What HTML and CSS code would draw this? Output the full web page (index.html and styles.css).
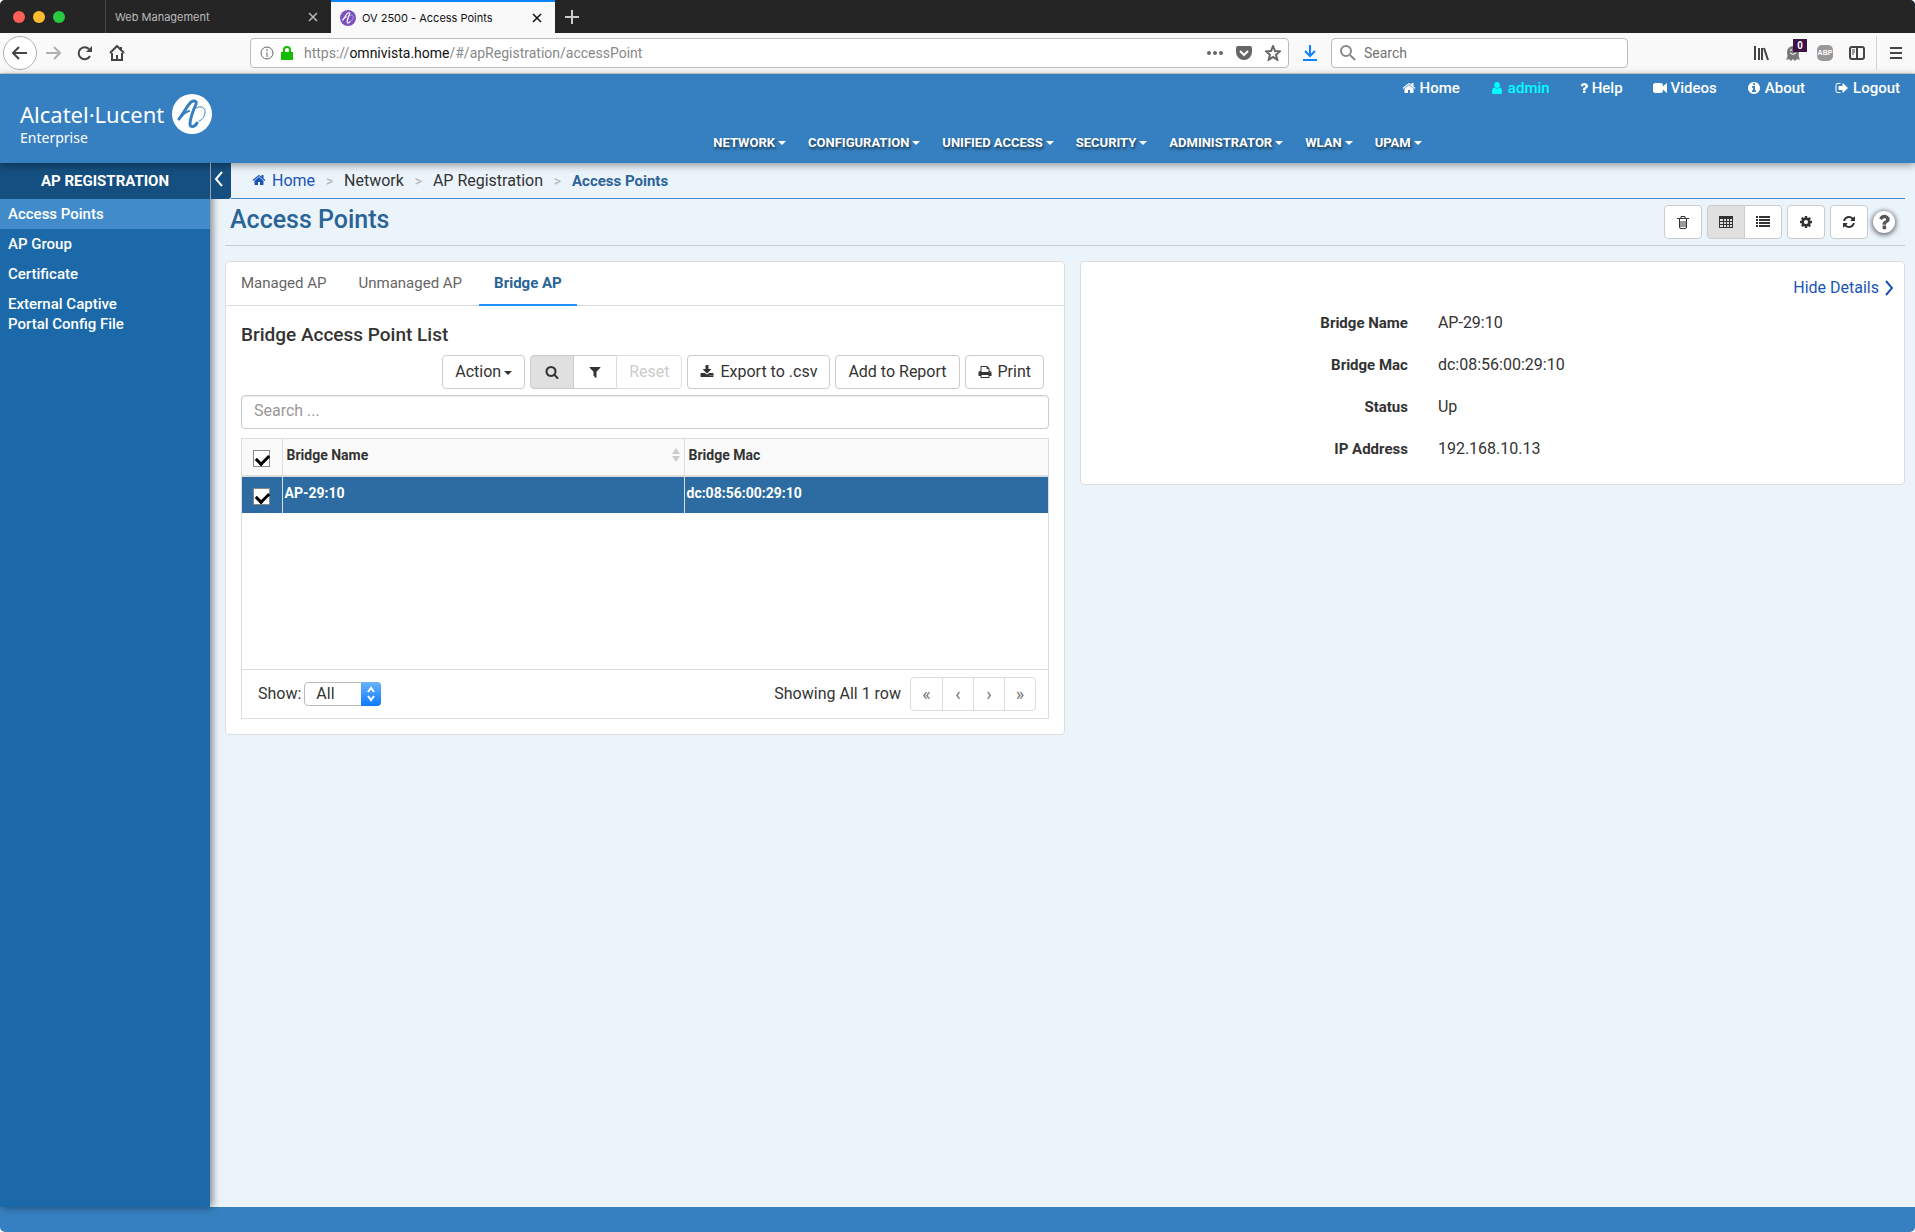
FILE: index.html
```
<!DOCTYPE html>
<html lang="en">
<head>
	<meta charset="UTF-8">
	<title>OV 2500 - Access Points</title>
	<link rel="stylesheet" href="styles.css">
</head>
<body>
<!-- icon sprite -->
<svg class="sprite" aria-hidden="true">
	<symbol id="i-home" viewBox="0 0 1792 1792"><path d="M1472 992v480q0 26-19 45t-45 19h-384v-384h-256v384h-384q-26 0-45-19t-19-45v-480q0-1 .5-3t.5-3l575-474 575 474q1 2 1 6zm223-69l-62 74q-8 9-21 11h-3q-13 0-21-7l-692-577-692 577q-12 8-24 7-13-2-21-11l-62-74q-8-10-7-23.5t11-21.5l719-599q32-26 76-26t76 26l244 204v-195q0-14 9-23t23-9h192q14 0 23 9t9 23v408l219 182q10 8 11 21.5t-7 23.5z"/></symbol>
	<symbol id="i-user" viewBox="0 0 1792 1792"><path d="M1536 1399q0 109-62.500 187t-150.500 78h-854q-88 0-150.500-78t-62.500-187q0-85 8.500-160.500t31.500-152 58.500-131 94-89 134.500-34.500q131 128 313 128t313-128q76 0 134.500 34.500t94 89 58.500 131 31.500 152 8.500 160.500zm-256-887q0 159-112.500 271.500t-271.500 112.500-271.500-112.500-112.500-271.500 112.500-271.500 271.500-112.500 271.500 112.500 112.500 271.500z"/></symbol>
	<symbol id="i-question" viewBox="384 0 1024 1792"><path d="M1088 1256v240q0 16-12 28t-28 12h-240q-16 0-28-12t-12-28v-240q0-16 12-28t28-12h240q16 0 28 12t12 28zm316-600q0 54-15.500 101t-35 76.500-55 59.500-57.500 43.500-61 35.500q-41 23-68.500 65t-27.500 67q0 17-12 32.500t-28 15.500h-240q-15 0-25.500-18.500t-10.500-37.500v-45q0-83 65-156.500t143-108.500q59-27 84-56t25-76q0-42-46.500-74t-107.500-32q-65 0-108 29-35 25-107 115-13 16-31 16-12 0-25-8l-164-125q-13-10-15.500-25t5.500-28q160-266 464-266 80 0 161 31t146 83 106 127.500 41 158.500z"/></symbol>
	<symbol id="i-video" viewBox="0 0 1792 1792"><path d="M1792 352v1088q0 42-39 59-13 5-25 5-27 0-45-19l-403-403v166q0 119-84.500 203.500t-203.500 84.500h-704q-119 0-203.500-84.500t-84.500-203.500v-704q0-119 84.500-203.500t203.500-84.500h704q119 0 203.500 84.500t84.500 203.500v165l403-402q18-19 45-19 12 0 25 5 39 17 39 59z"/></symbol>
	<symbol id="i-info" viewBox="0 0 1792 1792"><path d="M1152 1376v-160q0-14-9-23t-23-9h-96v-512q0-14-9-23t-23-9h-320q-14 0-23 9t-9 23v160q0 14 9 23t23 9h96v320h-96q-14 0-23 9t-9 23v160q0 14 9 23t23 9h448q14 0 23-9t9-23zm-128-896v-160q0-14-9-23t-23-9h-192q-14 0-23 9t-9 23v160q0 14 9 23t23 9h192q14 0 23-9t9-23zm640 416q0 209-103 385.500t-279.500 279.500-385.500 103-385.500-103-279.500-279.500-103-385.500 103-385.500 279.500-279.500 385.500-103 385.500 103 279.500 279.500 103 385.500z"/></symbol>
	<symbol id="i-logout" viewBox="0 0 1792 1792"><path d="M704 1440q0 4 1 20t.5 26.500-3 23.500-10 19.500-20.500 6.500h-320q-119 0-203.500-84.500t-84.500-203.500v-704q0-119 84.500-203.500t203.500-84.500h320q13 0 22.500 9.500t9.500 22.500q0 4 1 20t.5 26.500-3 23.500-10 19.500-20.500 6.500h-320q-66 0-113 47t-47 113v704q0 66 47 113t113 47h312l11.500 1 11.500 3 8 5.500 7 9 2 13.500zm928-544q0 26-19 45l-544 544q-19 19-45 19t-45-19-19-45v-288h-448q-26 0-45-19t-19-45v-384q0-26 19-45t45-19h448v-288q0-26 19-45t45-19 45 19l544 544q19 19 19 45z"/></symbol>
	<symbol id="i-search" viewBox="0 0 1792 1792"><path d="M1216 832q0-185-131.500-316.500t-316.500-131.500-316.500 131.500-131.500 316.500 131.500 316.500 316.500 131.500 316.500-131.500 131.500-316.500zm512 832q0 52-38 90t-90 38q-54 0-90-38l-343-342q-179 124-399 124-143 0-273.500-55.500t-225-150-150-225-55.500-273.500 55.500-273.500 150-225 225-150 273.500-55.500 273.500 55.500 225 150 150 225 55.500 273.500q0 220-124 399l343 343q37 37 37 90z"/></symbol>
	<symbol id="i-filter" viewBox="0 0 1792 1792"><path d="M1595 295q17 41-14 70l-493 493v742q0 42-39 59-13 5-25 5-27 0-45-19l-256-256q-19-19-19-45v-486l-493-493q-31-29-14-70 17-39 59-39h1280q42 0 59 39z"/></symbol>
	<symbol id="i-download" viewBox="0 0 1792 1792"><path d="M1344 1344q0-26-19-45t-45-19-45 19-19 45 19 45 45 19 45-19 19-45zm256 0q0-26-19-45t-45-19-45 19-19 45 19 45 45 19 45-19 19-45zm128-224v320q0 40-28 68t-68 28h-1472q-40 0-68-28t-28-68v-320q0-40 28-68t68-28h465l135 136q58 56 136 56t136-56l136-136h464q40 0 68 28t28 68zm-325-569q17 41-14 70l-448 448q-18 19-45 19t-45-19l-448-448q-31-29-14-70 17-39 59-39h256v-448q0-26 19-45t45-19h256q26 0 45 19t19 45v448h256q42 0 59 39z"/></symbol>
	<symbol id="i-print" viewBox="0 0 1792 1792"><path d="M448 1536h896v-256h-896v256zm0-640h896v-384h-160q-40 0-68-28t-28-68v-160h-640v640zm1152 64q0-26-19-45t-45-19-45 19-19 45 19 45 45 19 45-19 19-45zm128 0v416q0 13-9.500 22.500t-22.500 9.500h-224v160q0 40-28 68t-68 28h-960q-40 0-68-28t-28-68v-160h-224q-13 0-22.500-9.500t-9.500-22.500v-416q0-79 56.500-135.500t135.500-56.500h64v-544q0-40 28-68t68-28h672q40 0 88 20t76 48l152 152q28 28 48 76t20 88v256h64q79 0 135.500 56.500t56.500 135.500z"/></symbol>
	<symbol id="i-cog" viewBox="0 0 1792 1792"><path d="M1152 896q0-106-75-181t-181-75-181 75-75 181 75 181 181 75 181-75 75-181zm512-109v222q0 12-8 23t-20 13l-185 28q-19 54-39 91 35 50 107 138 10 12 10 25t-9 23q-27 37-99 108t-94 71q-12 0-26-9l-138-108q-44 23-91 38-16 136-29 186-7 28-36 28h-222q-14 0-24.500-8.500t-11.500-21.500l-28-184q-49-16-90-37l-141 107q-10 9-25 9-14 0-25-11-126-114-165-168-7-10-7-23 0-12 8-23 15-21 51-66.500t54-70.500q-27-50-41-99l-183-27q-13-2-21-12.500t-8-23.500v-222q0-12 8-23t19-13l186-28q14-46 39-92-40-57-107-138-10-12-10-24 0-10 9-23 26-36 98.500-107.500t94.500-71.500q13 0 26 10l138 107q44-23 91-38 16-136 29-186 7-28 36-28h222q14 0 24.500 8.500t11.500 21.500l28 184q49 16 90 37l142-107q9-9 24-9 13 0 25 10 129 119 165 170 7 8 7 22 0 12-8 23-15 21-51 66.500t-54 70.500q26 50 41 98l183 28q13 2 21 12.500t8 23.500z"/></symbol>
	<symbol id="i-refresh" viewBox="0 0 1792 1792"><path d="M1639 1056q0 5-1 7-64 268-268 434.500t-478 166.500q-146 0-282.500-55t-243.500-157l-129 129q-19 19-45 19t-45-19-19-45v-448q0-26 19-45t45-19h448q26 0 45 19t19 45-19 45l-137 137q71 66 161 102t187 36q134 0 250-65t186-179q11-17 53-117 8-23 30-23h192q13 0 22.500 9.500t9.500 22.500zm25-800v448q0 26-19 45t-45 19h-448q-26 0-45-19t-19-45 19-45l138-138q-148-137-349-137-134 0-250 65t-186 179q-11 17-53 117-8 23-30 23h-199q-13 0-22.500-9.500t-9.500-22.500v-7q65-268 270-434.500t480-166.500q146 0 284 55.500t245 156.500l130-129q19-19 45-19t45 19 19 45z"/></symbol>
	<symbol id="i-ale" viewBox="0 0 40 40"><circle cx="20" cy="20" r="20"/><path class="ink" d="M7 25C11 20 15 12 19 8C22 6 25 7 24 10C21 17 18 24 18 30C18 34 23 33 25 29" stroke-width="3"/><path class="ink" d="M7 25C10 21 14 18 17 17" stroke-width="2"/><path class="ink" d="M24 14C29 11 34 14 33 19C32 24 30 26 27 27" stroke-width="1"/></symbol>
</svg>

<div class="window">
	<!-- browser tabs -->
	<div class="tabbar">
		<div class="lights"><i class="red"></i><i class="yellow"></i><i class="green"></i></div>
		<div class="tab">
			<span>Web Management</span>
			<svg class="x" viewBox="0 0 10 10"><path d="M1 1l8 8M9 1l-8 8"/></svg>
		</div>
		<div class="tab current">
			<svg class="favicon"><use href="#i-ale"/></svg>
			<span>OV 2500 - Access Points</span>
			<svg class="x" viewBox="0 0 10 10"><path d="M1 1l8 8M9 1l-8 8"/></svg>
		</div>
		<svg class="plus" viewBox="0 0 14 14"><path d="M7 0v14M0 7h14"/></svg>
	</div>

	<!-- browser toolbar -->
	<div class="toolbar">
		<button class="back" aria-label="Back"><svg class="line" viewBox="0 0 16 16"><path d="M15 8H1M7 2L1 8l6 6"/></svg></button>
		<button class="tool dim" aria-label="Forward"><svg class="line" viewBox="0 0 16 16"><path d="M1 8h14M9 2l6 6-6 6"/></svg></button>
		<button class="tool" aria-label="Reload"><svg class="line" viewBox="0 0 16 16"><path d="M13 11A6 6 0 1 1 12 4"/><path class="solid" d="M15 1v6H9z"/></svg></button>
		<button class="tool" aria-label="Home page"><svg class="line" viewBox="0 0 16 16"><path d="M1 8l7-7 7 7M3 8v7h10V8"/><path class="solid" d="M7 10h2v5H7zM11 2h2v3h-2z"/></svg></button>
		<div class="urlbox">
			<svg class="info" viewBox="0 0 14 14"><circle cx="7" cy="7" r="6"/><path d="M7 6v5M7 3v2"/></svg>
			<svg class="lock" viewBox="0 0 14 14"><path d="M1 6h12v8H1z"/><path class="shackle" d="M4 7V4a3 3 0 0 1 6 0v3"/></svg>
			<div class="url">https://<b>omnivista.home</b>/#/apRegistration/accessPoint</div>
			<svg class="fill" viewBox="0 0 16 16"><circle cx="2" cy="8" r="2"/><circle cx="8" cy="8" r="2"/><circle cx="14" cy="8" r="2"/></svg>
			<svg class="fill" viewBox="0 0 16 16"><path d="M2 1h12q2 0 2 2v4a8 8 0 0 1-16 0V3q0-2 2-2z"/><path class="tick" d="M4 6l4 4 4-4"/></svg>
			<svg class="line" viewBox="0 0 16 16"><path d="M8 1l2 5 5 .4-4 3.400 1.300 5L8 12l-4.300 2.800 1.300-5-4-3.400L6 6z"/></svg>
		</div>
		<button class="tool blue" aria-label="Downloads"><svg class="line" viewBox="0 0 16 16"><path d="M8 0v11M3 6l5 5 5-5M1 15h14"/></svg></button>
		<label class="searchbox">
			<svg viewBox="0 0 16 16"><circle cx="6" cy="6" r="5"/><path d="M10 10l5 5"/></svg>
			<input type="text" placeholder="Search" aria-label="Search the web">
		</label>
		<div class="addons">
			<svg class="line" viewBox="0 0 16 16"><path d="M2 1v14M6 3v12M9 3v12M11 3l4 12"/></svg>
			<div class="ghost">
				<svg viewBox="0 0 16 16"><path d="M2 13C3 11 2 9 2 7a6 6 0 0 1 12 0c0 2-1 4 1 8l-3-1-2 2-2-2-2 2-2-2-3 1z"/><path class="face" d="M5 8q3 3 6 0M6 4v2M10 4v2"/></svg>
				<span class="badge">0</span>
			</div>
			<div class="abp">ABP</div>
			<svg class="line" viewBox="0 0 16 16"><rect x="1" y="2" width="14" height="12" rx="2"/><path d="M8 2v12"/><path class="thin" d="M3 5h3M3 7h3M3 9h2"/></svg>
			<span class="sep"></span>
			<svg class="line" viewBox="0 0 16 16"><path d="M2 3h12M2 8h12M2 13h12"/></svg>
		</div>
	</div>

	<header class="header">
		<div class="brand">
			<div>
				<div class="name">Alcatel·Lucent</div>
				<div class="sub">Enterprise</div>
			</div>
			<svg class="logo"><use href="#i-ale"/></svg>
		</div>
		<div class="menus">
			<nav class="topmenu">
				<a href="#"><svg><use href="#i-home"/></svg>Home</a>
				<a href="#" class="me"><svg><use href="#i-user"/></svg>admin</a>
				<a href="#"><svg class="slim"><use href="#i-question"/></svg>Help</a>
				<a href="#"><svg><use href="#i-video"/></svg>Videos</a>
				<a href="#"><svg><use href="#i-info"/></svg>About</a>
				<a href="#"><svg><use href="#i-logout"/></svg>Logout</a>
			</nav>
			<nav class="mainmenu">
				<a href="#">NETWORK<i class="caret"></i></a>
				<a href="#">CONFIGURATION<i class="caret"></i></a>
				<a href="#">UNIFIED ACCESS<i class="caret"></i></a>
				<a href="#">SECURITY<i class="caret"></i></a>
				<a href="#">ADMINISTRATOR<i class="caret"></i></a>
				<a href="#">WLAN<i class="caret"></i></a>
				<a href="#">UPAM<i class="caret"></i></a>
			</nav>
		</div>
	</header>

	<div class="main">
		<aside class="sidebar">
			<h2>AP REGISTRATION</h2>
			<a href="#" class="active">Access Points</a>
			<a href="#">AP Group</a>
			<a href="#">Certificate</a>
			<a href="#">External Captive<br>Portal Config File</a>
		</aside>

		<div class="content">
			<div class="crumbs">
				<button class="collapse" aria-label="Collapse menu"><svg viewBox="0 0 10 16"><path d="M8 1L2 8l6 7"/></svg></button>
				<ul>
					<li><a href="#"><svg><use href="#i-home"/></svg>Home</a></li>
					<li>Network</li>
					<li>AP Registration</li>
					<li class="here">Access Points</li>
				</ul>
			</div>

			<div class="titlebar">
				<h1>Access Points</h1>
				<button class="btn icon" aria-label="Delete"><svg viewBox="0 0 14 14"><path class="can" d="M4 6h6v6H4z"/><path class="line thin" d="M1 3.500h12M5 3V1.500h4V3M3.500 4v8q0 1.500 1.500 1.500h4q1.500 0 1.500-1.500V4"/></svg></button>
				<div class="group">
					<button class="btn icon on" aria-label="Table view"><svg viewBox="0 0 14 14"><path fill-rule="evenodd" d="M0 1h14v12H0zM1 4v2h3V4zM5 4v2h2V4zM8 4v2h2V4zM11 4v2h2V4zM1 7v2h3V7zM5 7v2h2V7zM8 7v2h2V7zM11 7v2h2V7zM1 10v2h3v-2zM5 10v2h2v-2zM8 10v2h2v-2zM11 10v2h2v-2z"/></svg></button>
					<button class="btn icon" aria-label="List view"><svg viewBox="0 0 14 14"><path d="M0 1h2v2H0zM3 1h11v2H3zM0 4h2v2H0zM3 4h11v2H3zM0 7h2v2H0zM3 7h11v2H3zM0 10h2v2H0zM3 10h11v2H3z"/></svg></button>
				</div>
				<button class="btn icon" aria-label="Settings"><svg><use href="#i-cog"/></svg></button>
				<button class="btn icon" aria-label="Refresh"><svg><use href="#i-refresh"/></svg></button>
				<button class="help" aria-label="Help"><svg><use href="#i-question"/></svg></button>
			</div>

			<div class="panels">
				<section class="panel">
					<nav class="tabs">
						<a href="#">Managed AP</a>
						<a href="#">Unmanaged AP</a>
						<a href="#" class="active">Bridge AP</a>
					</nav>
					<div class="body">
						<h3>Bridge Access Point List</h3>
						<div class="actions">
							<button class="btn">Action<i class="caret"></i></button>
							<div class="group">
								<button class="btn find on" aria-label="Show search"><svg><use href="#i-search"/></svg></button>
								<button class="btn find" aria-label="Filter"><svg><use href="#i-filter"/></svg></button>
								<button class="btn" disabled>Reset</button>
							</div>
							<button class="btn"><svg><use href="#i-download"/></svg>Export to .csv</button>
							<button class="btn">Add to Report</button>
							<button class="btn"><svg><use href="#i-print"/></svg>Print</button>
						</div>
						<input class="filter" type="text" placeholder="Search ..." aria-label="Search the list">
						<div class="grid">
							<div class="rows">
								<table>
									<thead>
										<tr>
											<th class="check"><input type="checkbox" checked aria-label="Select all"></th>
											<th class="nm"><div>Bridge Name<svg viewBox="0 0 8 14"><path d="M0 6l4-6 4 6zM0 8l4 6 4-6z"/></svg></div></th>
											<th>Bridge Mac</th>
										</tr>
									</thead>
									<tbody>
										<tr>
											<td class="check"><input type="checkbox" checked aria-label="Select AP-29:10"></td>
											<td>AP-29:10</td>
											<td>dc:08:56:00:29:10</td>
										</tr>
									</tbody>
								</table>
							</div>
							<div class="foot">
								<label for="show">Show:</label>
								<div class="select">
									<select id="show"><option>All</option></select>
									<svg viewBox="0 0 20 24"><path d="M7 10l3-4 3 4M7 14l3 4 3-4"/></svg>
								</div>
								<span class="count">Showing All 1 row</span>
								<div class="pager">
									<button aria-label="First">«</button>
									<button aria-label="Previous">‹</button>
									<button aria-label="Next">›</button>
									<button aria-label="Last">»</button>
								</div>
							</div>
						</div>
					</div>
				</section>

				<section class="panel details">
					<a href="#" class="hide">Hide Details<svg viewBox="0 0 10 16"><path d="M2 1l6 7-6 7"/></svg></a>
					<dl>
						<dt>Bridge Name</dt><dd>AP-29:10</dd>
						<dt>Bridge Mac</dt><dd>dc:08:56:00:29:10</dd>
						<dt>Status</dt><dd>Up</dd>
						<dt>IP Address</dt><dd>192.168.10.13</dd>
					</dl>
				</section>
			</div>
		</div>
	</div>
	<footer class="footer"></footer>
</div>
</body>
</html>
```
FILE: styles.css
```
*{
	box-sizing: border-box;
}
body{
	margin: 0;
	background: #fff;
	color: #333;
	font: 16px/20px Roboto, "Noto Sans", sans-serif;
}
a{
	text-decoration: none;
}
button, input, select{
	font: inherit;
	color: inherit;
}
button{
	padding: 0;
	border: 0;
	background: none;
}
h1, h2, h3, ul, dl, dd{
	margin: 0;
	padding: 0;
}
svg{
	flex: none;
	width: 14px;
	height: 14px;
	fill: currentColor;
}
.sprite{
	position: absolute;
	width: 0;
	height: 0;
}
.ink{
	fill: none;
	stroke: var(--ink);
	stroke-linecap: round;
}
.window{
	display: flex;
	flex-direction: column;
	min-height: 100vh;
	border-radius: 5px;
	overflow: hidden;
	background: #3680c1;
}

/* browser */
.tabbar{
	display: flex;
	align-items: center;
	height: 33px;
	background: #252525;
	font: 11px/16px Inter, sans-serif;
}
.lights{
	display: flex;
	gap: 8px;
	width: 105px;
	padding-left: 13px;
}
.lights i{
	width: 12px;
	height: 12px;
	border-radius: 50%;
}
.red{
	background: #ff5f57;
}
.yellow{
	background: #ffbd2e;
}
.green{
	background: #28ca41;
}
.tab{
	display: flex;
	align-items: center;
	gap: 6px;
	width: 226px;
	height: 33px;
	padding: 0 13px 0 9px;
	border-left: 1px solid #4a4a4a;
	color: #bbb;
}
.tab span{
	flex: 1;
	white-space: nowrap;
}
.tab.current{
	width: 224px;
	border-top: 2px solid #0a84ff;
	border-left: 0;
	background: #f9f9fa;
	color: #111;
}
.tab .favicon{
	--ink: #fff;
	width: 16px;
	height: 16px;
	color: #7a52c0;
}
.x, .plus{
	width: 10px;
	height: 10px;
	stroke: currentColor;
	stroke-width: 1.5;
}
.plus{
	width: 14px;
	height: 14px;
	margin-left: 10px;
	color: #ccc;
	stroke-width: 2;
}
.toolbar{
	display: flex;
	align-items: center;
	height: 41px;
	padding: 0 11px 0 3px;
	border-bottom: 1px solid #d0d0d0;
	background: #f9f9fa;
	color: #444;
	font: 14px/20px Roboto, sans-serif;
}
.toolbar svg{
	width: 16px;
	height: 16px;
}
.line{
	fill: none;
	stroke: currentColor;
	stroke-width: 2;
}
.line .solid{
	fill: currentColor;
	stroke: none;
}
.thin{
	stroke-width: 1;
}
.back, .tool{
	display: flex;
	align-items: center;
	justify-content: center;
	width: 32px;
	height: 34px;
}
.back{
	width: 34px;
	border: 1px solid #b1b1b1;
	border-radius: 50%;
	background: #fff;
}
.dim{
	color: #b0b0b0;
}
.blue{
	width: 42px;
	color: #0a84ff;
}
.urlbox{
	display: flex;
	align-items: center;
	gap: 13px;
	flex: 1;
	height: 30px;
	margin-left: 117px;
	padding: 0 7px 0 9px;
	border: 1px solid #bbb;
	border-radius: 4px;
	background: #fff;
	color: #666;
}
.url{
	flex: 1;
	margin-left: -3px;
	color: #888;
}
.url b{
	color: #111;
	font-weight: 400;
}
.toolbar .info, .toolbar .lock{
	width: 14px;
	height: 14px;
}
.info{
	fill: none;
	stroke: #666;
}
.lock{
	margin-left: -7px;
	fill: #12bc00;
}
.shackle{
	fill: none;
	stroke: #12bc00;
	stroke-width: 2;
}
.tick{
	fill: none;
	stroke: #fff;
	stroke-width: 2;
}
.searchbox{
	display: flex;
	align-items: center;
	gap: 8px;
	width: 297px;
	height: 30px;
	padding: 0 8px;
	border: 1px solid #bbb;
	border-radius: 4px;
	background: #fff;
}
.searchbox svg{
	fill: none;
	stroke: #888;
	stroke-width: 2;
}
.searchbox input{
	width: 100%;
	padding: 0;
	border: 0;
	outline: 0;
}
.searchbox input::placeholder{
	color: #737373;
}
.addons{
	display: flex;
	align-items: center;
	gap: 16px;
	margin-left: 125px;
}
.ghost{
	position: relative;
	height: 16px;
	color: #777;
}
.ghost svg{
	display: block;
}
.face{
	fill: none;
	stroke: #fff;
}
.badge{
	position: absolute;
	left: 8px;
	top: -6px;
	width: 14px;
	background: #3d1245;
	color: #fff;
	font: bold 10px/13px "Liberation Sans", sans-serif;
	text-align: center;
}
.abp{
	display: flex;
	justify-content: center;
	width: 16px;
	height: 16px;
	border-radius: 5px;
	background: #999;
	color: #fff;
	font: bold 7px/16px "Liberation Sans", sans-serif;
}
.sep{
	width: 1px;
	height: 34px;
	margin: 0 -5px;
	background: #d5d5d5;
}

/* page header */
.header{
	--ink: #3680c1;
	position: relative;
	z-index: 1;
	display: flex;
	height: 89px;
	background: #3680c1;
	box-shadow: 0 2px 8px rgba(0,0,0,.4);
	color: #fff;
}
.brand{
	display: flex;
	gap: 8px;
	width: 220px;
	padding: 20px 0 0 20px;
}
.name{
	padding-top: 6px;
	font: 22px/28px "Noto Sans", sans-serif;
	white-space: nowrap;
}
.sub{
	font: 14px/20px "Noto Sans", sans-serif;
}
.logo{
	width: 40px;
	height: 40px;
}
.menus{
	flex: 1;
}
.topmenu, .mainmenu{
	display: flex;
}
.topmenu a, .mainmenu a{
	display: flex;
	align-items: center;
	color: #fff;
	white-space: nowrap;
}
.topmenu{
	justify-content: flex-end;
	gap: 30px;
	padding: 4px 15px 0 0;
	font-size: 15px;
	font-weight: 500;
}
.topmenu svg{
	margin-right: 4px;
}
.topmenu .slim{
	width: 8px;
}
.topmenu .me{
	color: #0ff;
}
.mainmenu{
	justify-content: center;
	gap: 22px;
	margin-top: 35px;
	font-size: 13px;
	font-weight: 700;
	text-shadow: 1px 2px 3px rgba(0,0,0,.6);
}
.caret{
	display: inline-block;
	margin-left: 3px;
	border: 4px solid transparent;
	border-top-color: currentColor;
	border-bottom: 0;
	vertical-align: middle;
}

/* sidebar */
.main{
	display: flex;
	flex: 1;
}
.sidebar{
	position: relative;
	width: 210px;
	background: #1b69a9;
	box-shadow: 2px 0 8px rgba(0,0,0,.5);
	font-size: 15px;
	font-weight: 500;
}
.sidebar h2{
	padding: 8px 0;
	background: #154f7f;
	color: #fff;
	font-size: 15px;
	font-weight: 700;
	line-height: 20px;
	text-align: center;
}
.sidebar a{
	display: block;
	padding: 5px 8px;
	color: #fff;
}
.sidebar .active{
	background: #428bca;
}

/* content */
.content{
	flex: 1;
	padding-right: 10px;
	background: #ebf3fb;
}
.crumbs{
	display: flex;
	height: 36px;
	padding-left: 1px;
}
.collapse{
	position: relative;
	width: 20px;
	padding-left: 2px;
	border-radius: 0 0 3px 0;
	background: #154f7f;
	color: #fff;
}
.collapse svg, .hide svg{
	width: 10px;
	height: 16px;
	fill: none;
	stroke: currentColor;
	stroke-width: 2;
	vertical-align: middle;
}
.crumbs ul{
	display: flex;
	flex: 1;
	padding: 8px 0 0 21px;
	border-bottom: 1px solid #428bca;
	list-style: none;
}
.crumbs li + li::before{
	content: ">";
	display: inline-block;
	width: 29px;
	color: #bbb;
	font-size: 14px;
	font-weight: 500;
	text-align: center;
}
.crumbs svg{
	margin-right: 6px;
	vertical-align: -1px;
}
.crumbs a, .hide{
	color: #1a54b8;
}
.crumbs .here{
	color: #2a6496;
	font-size: 15px;
	font-weight: 700;
}
.titlebar{
	display: flex;
	align-items: center;
	gap: 5px;
	height: 47px;
	margin-left: 15px;
	padding-right: 10px;
	border-bottom: 1px solid #ccc;
}
h1{
	flex: 1;
	padding: 0 0 4px 5px;
	color: #2a6496;
	font-size: 25px;
	font-weight: 500;
	line-height: 36px;
}
.btn{
	height: 34px;
	padding: 0 12px;
	border: 1px solid #ccc;
	border-radius: 4px;
	background: #fff;
	white-space: nowrap;
}
.btn svg{
	margin-right: 6px;
	vertical-align: -2px;
}
.icon, .find{
	width: 38px;
	padding: 0;
}
.find{
	width: 44px;
}
.icon svg, .find svg{
	margin: 0;
}
.can{
	fill: #999;
}
.btn.on{
	background: #e0e0e0;
}
.btn:disabled{
	border-color: #ddd;
	color: #ccc;
}
.group{
	display: flex;
}
.group .btn + .btn{
	margin-left: -1px;
	border-radius: 0;
}
.group .btn:first-child{
	border-radius: 4px 0 0 4px;
}
.group .btn:last-child{
	border-radius: 0 4px 4px 0;
}
.help{
	width: 22px;
	height: 22px;
	border-radius: 50%;
	background: #fff;
	box-shadow: 0 1px 5px 1px rgba(0,0,0,.6);
	color: #555;
}
.help svg{
	width: 20px;
	height: 20px;
	margin: 1px;
	vertical-align: top;
}
.panels{
	display: grid;
	grid-template-columns: 56fr 55fr;
	align-items: start;
	gap: 15px;
	padding: 15px 0 0 15px;
}
.panel{
	border: 1px solid #ddd;
	border-radius: 4px;
	background: #fff;
}
.tabs{
	display: flex;
	gap: 2px;
	border-bottom: 1px solid #ddd;
	font-size: 15px;
}
.tabs a{
	margin-bottom: -1px;
	padding: 11px 15px;
	border-bottom: 2px solid transparent;
	color: #666;
}
.tabs .active{
	border-color: #1e90ff;
	color: #2a6496;
	font-weight: 700;
}
.body{
	padding: 17px 15px 15px;
}
h3{
	font-size: 19px;
	font-weight: 500;
	line-height: 24px;
}
.actions{
	display: flex;
	justify-content: flex-end;
	gap: 5px;
	margin: 8px 5px 6px 0;
}
.filter{
	display: block;
	width: 100%;
	height: 34px;
	padding: 0 12px 3px;
	border: 1px solid #ccc;
	border-radius: 4px;
	background: #fff;
	box-shadow: inset 0 1px 1px rgba(0,0,0,.08);
}
.filter::placeholder{
	color: #999;
}
.grid{
	margin-top: 9px;
	border: 1px solid #ddd;
}
.rows{
	min-height: 230px;
}
table{
	width: 100%;
	border-collapse: collapse;
	font-size: 14px;
	font-weight: 700;
}
th, td{
	height: 37px;
	padding: 0 2px 4px;
	border-left: 1px solid #ddd;
	text-align: left;
}
th{
	padding: 0 4px 4px;
	border-bottom: 2px solid #ddd;
	background: #fafafa;
}
td{
	background: #2d6ca2;
	color: #fff;
}
.check{
	width: 40px;
	padding-bottom: 0;
	border-left: 0;
	text-align: center;
}
.nm{
	width: 402px;
}
.nm div{
	display: flex;
	align-items: center;
	justify-content: space-between;
}
.nm svg{
	width: 8px;
	color: #ccc;
}
.check input{
	appearance: none;
	width: 17px;
	height: 17px;
	margin: 0;
	border: 1px solid #888;
	background: #fff;
	vertical-align: middle;
}
.check input:checked::before{
	content: "";
	display: block;
	width: 10px;
	height: 6px;
	margin: 3px 2px;
	border: solid #000;
	border-width: 0 0 3px 3px;
	transform: rotate(-45deg);
}
.foot{
	display: flex;
	align-items: center;
	height: 49px;
	padding: 0 12px 0 16px;
	border-top: 1px solid #ddd;
}
.select{
	position: relative;
	height: 24px;
	margin-left: 3px;
}
.select select{
	appearance: none;
	width: 77px;
	height: 24px;
	padding: 0 11px;
	border: 1px solid #bbb;
	border-radius: 4px;
	background: #fff;
}
.select svg{
	position: absolute;
	top: 0;
	right: 0;
	width: 20px;
	height: 24px;
	border-radius: 0 4px 4px 0;
	background: linear-gradient(#6cb3fa, #0a7aff);
	fill: none;
	stroke: #fff;
	stroke-width: 2;
	pointer-events: none;
}
.count{
	margin: 0 9px 0 auto;
}
.pager{
	display: flex;
	height: 34px;
	border: 1px solid #ddd;
	border-radius: 4px;
}
.pager button{
	width: 31px;
	color: #777;
	font-size: 18px;
}
.pager button + button{
	border-left: 1px solid #ddd;
}
.details{
	padding: 16px 10px 15px;
}
.hide{
	display: block;
	text-align: right;
}
.hide svg{
	margin-left: 5px;
	vertical-align: -3px;
}
dl{
	display: grid;
	grid-template-columns: 41fr 59fr;
	gap: 22px 30px;
	padding: 15px 0 10px;
}
dt{
	font-size: 15px;
	font-weight: 700;
	text-align: right;
}
.footer{
	height: 25px;
}
```
